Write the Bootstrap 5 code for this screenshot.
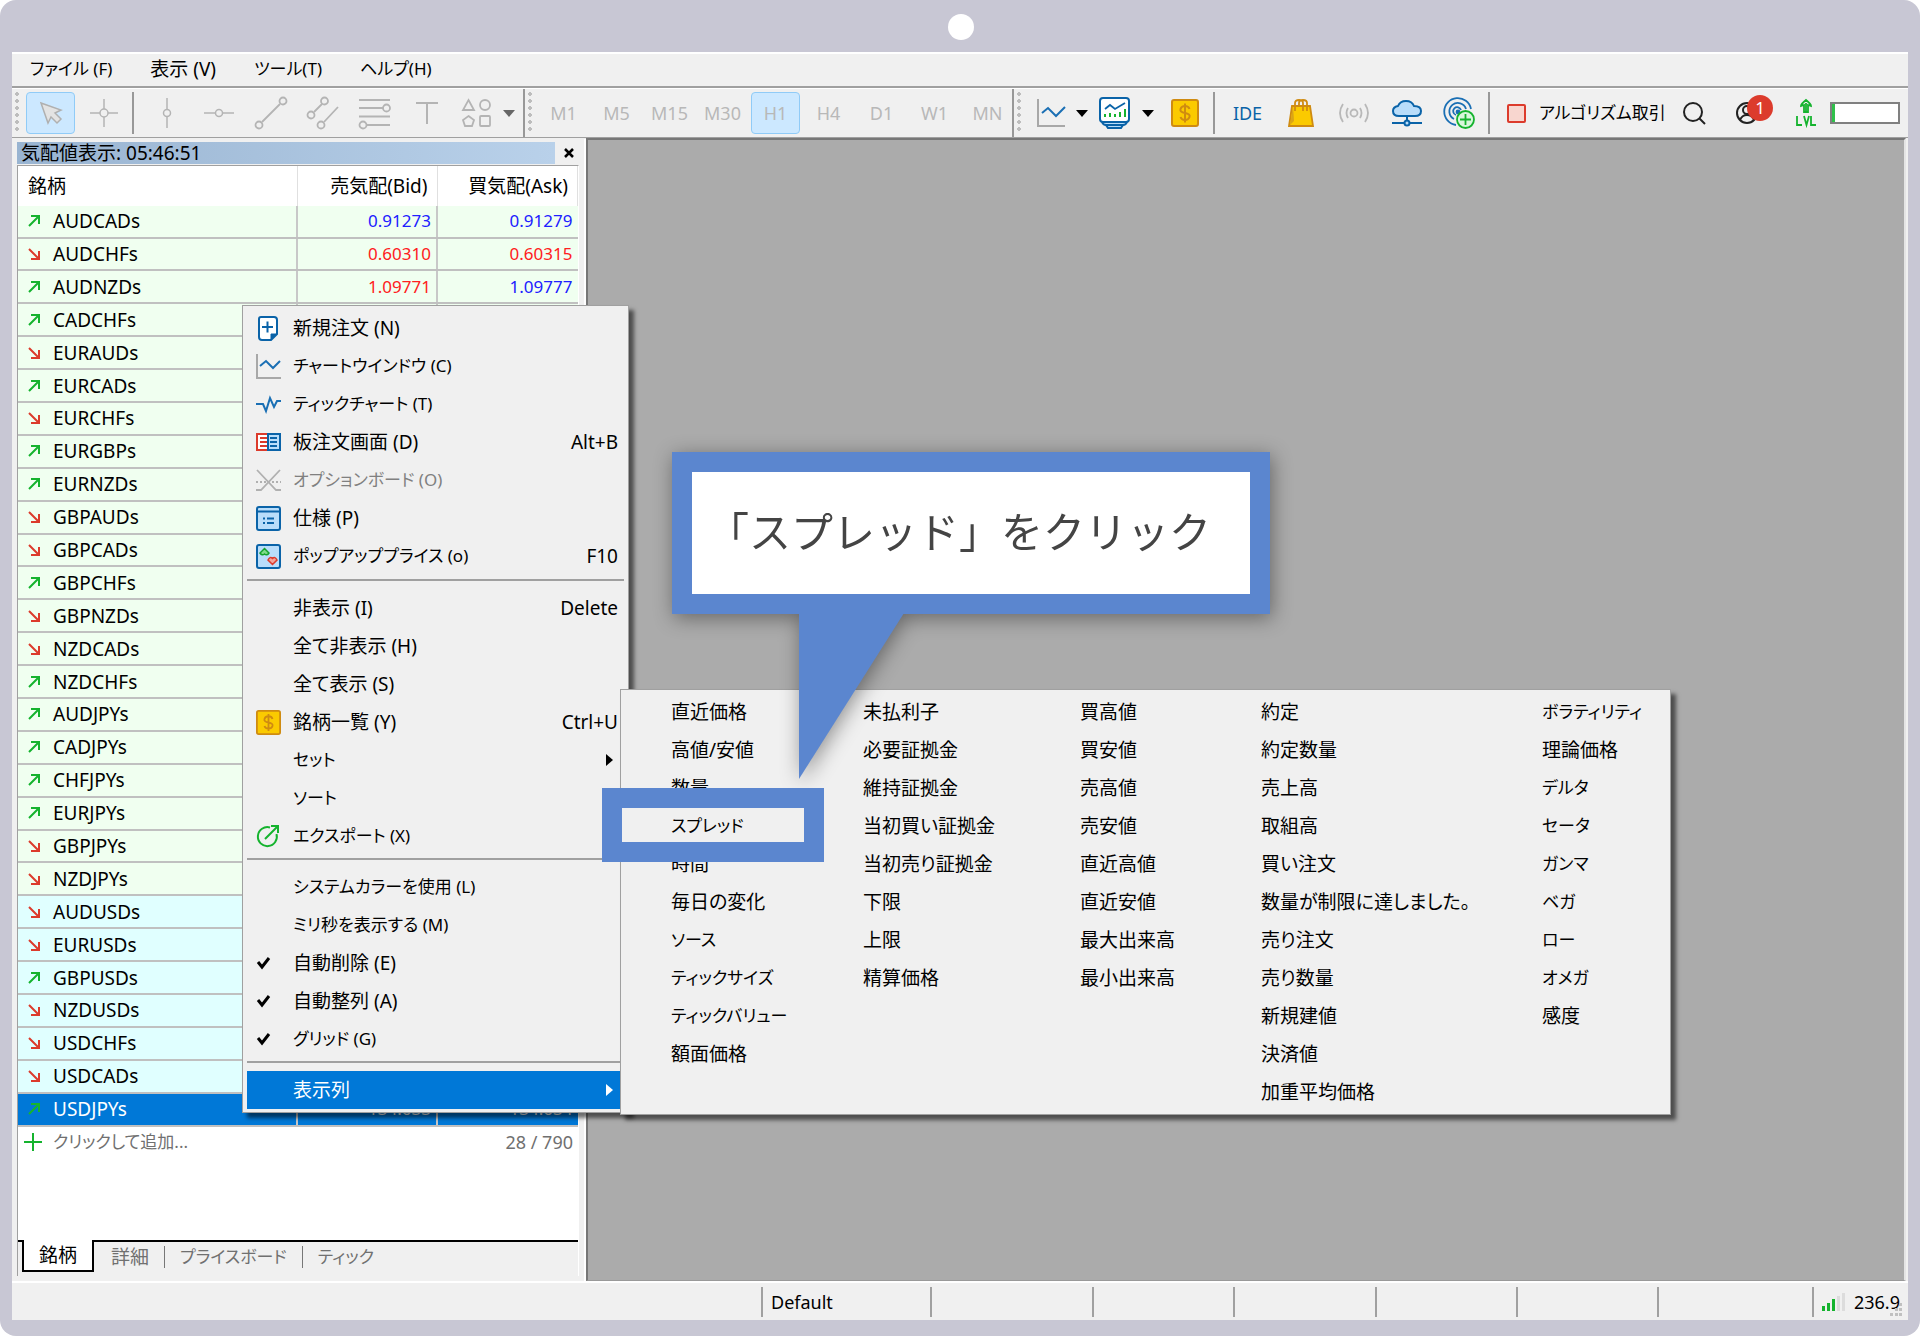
<!DOCTYPE html>
<html lang="ja">
<head>
<meta charset="utf-8">
<meta name="viewport" content="width=device-width, initial-scale=1">
<title>気配値表示</title>
<link href="https://cdn.jsdelivr.net/npm/bootstrap@5.3.0/dist/css/bootstrap.min.css" rel="stylesheet">
<style>
  html{background:#fff}
  body{
    --face:#f0f0f0; --edge:#a0a0a0; --accent:#5b86cf; --pick:#0078d7;
    margin:0; min-height:100vh; padding:0 12px 16px; border-radius:16px; background:#c8c7d4; color:#000;
    font-family:"Noto Sans","Noto Sans CJK JP",sans-serif; font-size:19px; line-height:24px;
    font-feature-settings:"palt";
  }
  button,a{font:inherit;color:inherit;text-decoration:none;font-feature-settings:inherit}
  svg{display:block;flex:none;overflow:visible}
  .frame-top{height:52px;padding:2px 0 0 2px}
  .cam{width:26px;height:26px;background:#fff}
  .app{flex:1;background:var(--face);border-top:2px solid #fff;min-width:0}
  .menu-row{height:34px;border-bottom:2px solid var(--edge);padding:0 0 2px 18px;gap:38px}
  .kana{font-size:17px}
  .latin,.tool{font-size:18px}
  .tool-row{height:50px;border-top:1px solid #fff;border-bottom:1px solid var(--edge)}
  .grip{width:4px;height:42px;margin:0 7px 0 3px;background:radial-gradient(circle at 2px 2px,#bdbdbd 2px,transparent 2px) 0 0/4px 7px}
  .tool{width:49px;height:42px;padding:0;border:1px solid transparent;border-radius:4px;background:none;color:#b8b8b8;display:flex;align-items:center;justify-content:center;flex:none}
  .tool.active{background:#cce8ff;border-color:#90cbf7}
  .tool.slim{width:17px}
  .tool.snug{width:45px}
  .tools{display:flex;gap:4px}
  .tools.close-set{gap:3px}
  .rule{width:2px;height:42px;background:#989898;flex:none}
  .rule.full{height:48px}
  .ide{color:#0a63a8}
  .blk{color:#000}
  .round-num{width:26px;height:26px;background:#dc3b2c;color:#fff;font-size:17px;line-height:26px;left:11px;top:-7px}
  .meter{width:70px;height:22px;border:2px solid #808080;background:#fff}
  .meter>i{display:block;height:100%;background:#2fc04a}
  .stage{flex:1}
  .panel{width:574px;border-right:2px solid #fff;padding:3px 5px 0 5px;margin-top:1px}
  .panel-title{height:22px;gap:4px}
  .panel-title h1{font-size:19px;line-height:22px;margin:0;padding-left:4px;font-weight:400;background:linear-gradient(90deg,#99b4d1,#b9d1ea)}
  .x-btn{width:20px;height:20px;border:0;background:none;padding:0}
  .sheet{margin-top:1px;border:1px solid var(--edge);border-bottom:0;border-right-color:#fff;background:#fff}
  .quotes{height:961px;margin:0;table-layout:fixed;width:100%;border-collapse:collapse}
  .quotes th{font-weight:400;height:40px;padding:0 9px 0 10px;border-right:1px solid #e0e0e0}
  .quotes td{padding:0 5px 0 10px;border-bottom:2px solid #c0c0c0;border-right:2px solid #c8c8c8;line-height:22px}
  .quotes td:last-child{border-right:0}
  .quotes .n{text-align:right;font-size:17px}
  .up-num{color:#2020ff}.dn-num{color:#ff2020}
  .g-jpy td{background:#f0fff0}.g-usd td{background:#e0ffff}.g-sel td{background:var(--pick);color:#fff}
  .add-row{height:30px;padding:0 5px 0 6px;gap:11px;color:#707070}
  .blank{flex:1}
  .tabs-bar{border-top:2px solid #000;height:36px;background:var(--face);padding-left:4px;color:#707070}
  .tabs-bar button{border:0;background:none;height:29px;padding:0 15px;line-height:26px}
  .tabs-bar button.on{background:#fff;color:#000;border:2px solid #000;border-top:0;height:32px;margin-top:-2px;margin-right:2px;width:72px;padding:0}
  .tabs-bar i{width:1px;height:22px;margin-top:4px;background:#777}
  .desk{flex:1;background:#ababab;border:2px solid #777;border-right:2px solid #e4e4e4;border-bottom:1px solid #999;margin-right:2px}
  .status{height:39px;border-top:2px solid #fff}
  .status>div{border-left:2px solid #a0a0a0;height:30px;line-height:30px;padding-left:8px}
  .flyout{position:absolute;display:block;background:var(--face);border:1px solid var(--edge);border-radius:0;color:#000;box-shadow:5px 5px 4px rgba(0,0,0,.55);padding:3px 4px;margin:0;font-size:19px;z-index:2}
  .ctx{left:230px;top:167px;width:387px}
  .ctx button,.sub button{display:flex;align-items:center;width:100%;height:38px;border:0;background:none;padding:0;text-align:left;white-space:nowrap}
  .ctx .ic{width:26px;height:26px;margin:0 12px 0 8px;display:grid;place-items:center;flex:none}
  .ctx kbd{margin-left:auto;margin-right:6px;background:none;color:inherit;font:inherit;padding:0}
  .ctx .tri{margin-left:auto;margin-right:11px}
  .ctx hr{margin:3px 0 8px;border:0;border-top:2px solid var(--edge);opacity:1}
  .ctx hr:first-of-type{margin-top:4px}
  .ctx .gray{color:#808080}
  .ctx button.cur{background:var(--pick);color:#fff}
  .sub{left:608px;top:551px;width:1051px;padding:3px 0 3px 50px;z-index:3}
  .sub .cols{display:grid;grid-template-columns:192px 217px 181px 281px 1fr}
  .ring{position:absolute;left:590px;top:650px;width:222px;height:74px;border:20px solid var(--accent);z-index:5}
  .say{position:absolute;left:660px;top:314px;width:598px;z-index:4;filter:drop-shadow(2px 4px 10px rgba(0,0,0,.4))}
  .say p{margin:0;height:162px;padding-right:24px;border:20px solid var(--accent);background:#fff;color:#444;font:400 42px/115px "Noto Sans CJK JP",sans-serif;font-feature-settings:normal;text-align:center;white-space:nowrap}
  .say svg{margin:-1px 0 0 127px}
</style>
<script src="https://cdn.jsdelivr.net/npm/bootstrap@5.3.0/dist/js/bootstrap.bundle.min.js"></script>
</head>
<body class="d-flex flex-column">
<div class="frame-top d-flex justify-content-center align-items-center"><span class="cam rounded-circle"></span></div>
<main class="app d-flex flex-column">
  <nav class="menu-row d-flex align-items-center" aria-label="メニュー">
    <a href="#" class="kana">ファイル (F)</a><a href="#">表示 (V)</a><a href="#" class="kana">ツール(T)</a><a href="#" class="kana">ヘルプ(H)</a>
  </nav>

  <div class="tool-row d-flex align-items-center" role="toolbar" aria-label="ツールバー">
    <span class="grip"></span>
    <div class="tools">
      <button class="tool active" aria-label="カーソル"><svg width="24" height="24" fill="#e3e3e3" stroke="#b0b0b0" stroke-width="1.5"><path d="M2 2 22 9 16 12 22 18 18 22 12 16 9 22Z"/></svg></button>
      <button class="tool" aria-label="十字"><svg width="28" height="28" fill="none" stroke="#b4b4b4" stroke-width="1.5"><path d="M14 0v10M14 18v10M0 14h10M18 14h10"/><circle cx="14" cy="14" r="4"/></svg></button>
    </div>
    <span class="rule ms-1 me-2"></span>
    <div class="tools close-set">
      <button class="tool" aria-label="垂直線"><svg width="30" height="30" fill="none" stroke="#b4b4b4" stroke-width="1.5"><path d="M15 0v11M15 19v11"/><circle cx="15" cy="15" r="3.5"/></svg></button>
      <button class="tool" aria-label="水平線"><svg width="30" height="30" fill="none" stroke="#b4b4b4" stroke-width="1.5"><path d="M0 15h11M19 15h11"/><circle cx="15" cy="15" r="3.5"/></svg></button>
      <button class="tool" aria-label="トレンドライン"><svg width="32" height="32" fill="none" stroke="#b4b4b4" stroke-width="1.8"><path d="M7 25 25 7"/><circle cx="4" cy="28" r="3.5"/><circle cx="28" cy="4" r="3.5"/></svg></button>
      <button class="tool" aria-label="チャネル"><svg width="32" height="32" fill="none" stroke="#b4b4b4" stroke-width="1.8"><path d="M7 15 15 7M17 25 31 10"/><circle cx="4" cy="18" r="3.5"/><circle cx="17.500" cy="4" r="3.5"/><circle cx="14" cy="28" r="3.5"/></svg></button>
      <button class="tool" aria-label="フィボナッチ"><svg width="32" height="30" fill="none" stroke="#b4b4b4" stroke-width="1.8"><path d="M0 2h31M0 10h24M0 18.500h31M8 27h23"/><circle cx="27.500" cy="10" r="3.500"/><circle cx="4" cy="27" r="3.500"/></svg></button>
      <button class="tool" aria-label="テキスト"><svg width="22" height="22" fill="none" stroke="#b4b4b4" stroke-width="2"><path d="M0 1h22M11 1v21"/></svg></button>
      <button class="tool snug" aria-label="図形"><svg width="29" height="30" fill="none" stroke="#b4b4b4" stroke-width="1.8"><path d="M6.500 2 12 12H1ZM6.500 18l5.500 4-2 6H3l-2-6Z"/><circle cx="23" cy="7" r="5"/><rect x="18" y="18" width="10" height="10" rx="1"/></svg></button>
    </div>
    <svg width="12" height="7" fill="#666" class="ms-1"><path d="M0 0h12L6 7Z"/></svg>
    <span class="rule full ms-2"></span>
    <span class="grip"></span>
    <div class="tools">
      <button class="tool">M1</button><button class="tool">M5</button><button class="tool">M15</button><button class="tool">M30</button><button class="tool active">H1</button><button class="tool">H4</button><button class="tool">D1</button><button class="tool">W1</button><button class="tool">MN</button>
    </div>
    <span class="rule full"></span>
    <span class="grip"></span>
    <button class="tool snug" aria-label="ラインチャート"><svg width="28" height="28" fill="none" stroke-width="2"><path d="M1 0v27h27" stroke="#a8a8a8"/><path d="M5 14 11 9l8 8 9-9" stroke="#1a6fb4"/></svg></button>
    <button class="tool slim blk" aria-label="種類"><svg width="12" height="7"><path d="M0 0h12L6 7Z"/></svg></button>
    <button class="tool" aria-label="指標"><svg width="31" height="32" fill="#fff" stroke="#0a63a8" stroke-width="2"><path d="M3 25q1 3 4 3l2 3h13l2-3q3 0 4-3" fill="#b9ddfa"/><path d="M6 28h19"/><rect x="1" y="1" width="29" height="24" rx="3"/><path d="M6 12l5-4 5 4 10-6" fill="none" stroke-width="1.800"/><path d="M6 20v-3M11 20v-4M16 20v-3M21 20v-5M26 20v-8" stroke="#15b32e"/></svg></button>
    <button class="tool slim blk" aria-label="指標一覧"><svg width="12" height="7"><path d="M0 0h12L6 7Z"/></svg></button>
    <button class="tool ms-1" aria-label="銘柄"><svg width="28" height="28"><use href="#coin"/></svg></button>
    <span class="rule ms-1 me-2"></span>
    <div class="tools">
      <button class="tool ide">IDE</button>
      <button class="tool" aria-label="マーケット"><svg width="26" height="28" fill="#fbca00" stroke="#cf8b11" stroke-width="1.800"><path d="M4 7h18l3 20H1Z"/><path d="M5 7 2 26l4-4Z" fill="#dba417" stroke="none"/><path d="M7 12V4q0-3 4-3t4 3v8M11 8V4q0-3 4-3t4 3v8" fill="none"/></svg></button>
      <button class="tool" aria-label="シグナル"><svg width="30" height="20" fill="none" stroke="#b8b8b8" stroke-width="1.800"><circle cx="15" cy="10" r="3.500"/><path d="M9 5q-3 5 0 10M21 5q3 5 0 10M4 1q-6 9 0 18M26 1q6 9 0 18"/></svg></button>
      <button class="tool" aria-label="VPS"><svg width="30" height="26" fill="#b9ddfa" stroke="#0a63a8" stroke-width="2"><path d="M7 16q-6 0-6-5 0-4 5-5 2-5 8-5t8 5q7 0 7 5t-6 5Z"/><path d="M15 16v6M0 23h12M18 23h12" fill="none"/><circle cx="15" cy="23" r="2.500"/></svg></button>
      <button class="tool" aria-label="接続"><svg width="31" height="31" fill="none" stroke="#1a6fb4" stroke-width="1.800"><path d="M12 27A13.500 13.500 0 1 1 27 11M10 21A8.500 8.500 0 1 1 22 11M12 17A4 4 0 1 1 17 12"/><circle cx="14" cy="14" r="1.500" fill="#1a6fb4"/><circle cx="21.500" cy="21.500" r="8.500" fill="#d8f7dc" stroke="#15b32e"/><path d="M16 21.500h11M21.500 16v11" stroke="#15b32e"/></svg></button>
    </div>
    <span class="rule ms-1 me-3"></span>
    <button class="tool blk w-auto" style="gap:13px"><svg width="19" height="19"><rect x="1" y="1" width="17" height="17" rx="1" fill="#f8d6cf" stroke="#dc3b2c" stroke-width="2"/></svg><span class="kana">アルゴリズム取引</span></button>
    <div class="d-flex align-items-center ms-auto me-2" style="gap:14px">
      <svg class="me-3" width="23" height="23" fill="none" stroke="#222" stroke-width="2"><circle cx="10" cy="10" r="9"/><path d="m16 16 6 6"/></svg>
      <span class="position-relative me-4"><svg width="22" height="22" fill="none" stroke="#222" stroke-width="2"><circle cx="11" cy="11" r="10"/><circle cx="11" cy="8" r="4"/><path d="M4 18q2-5 7-5t7 5"/></svg><span class="round-num position-absolute rounded-circle text-center">1</span></span>
      <svg width="20" height="28" fill="none" stroke="#15b32e" stroke-width="1.800"><path d="M5 7q0-2 5-6 5 4 5 6l-3-1v7H8V6Z"/><path d="M10 4v8M1 17v9h5M8 17l2.500 9 2.500-9M15 17v9h5"/></svg>
      <div class="meter"><i style="width:5%"></i></div>
    </div>
  </div>

  <div class="stage d-flex position-relative">
    <section class="panel d-flex flex-column flex-shrink-0">
      <div class="panel-title d-flex align-items-center"><h1 class="flex-fill">気配値表示: 05:46:51</h1>
        <button class="x-btn" aria-label="閉じる"><svg width="10" height="10" class="mx-auto" stroke="#000" stroke-width="2.500"><path d="m1 1 8 8M9 1 1 9"/></svg></button></div>
      <div class="sheet flex-fill d-flex flex-column">
        <table class="quotes"><colgroup><col style="width:279px"><col style="width:140px"><col></colgroup>
          <thead><tr><th>銘柄</th><th class="text-end">売気配(Bid)</th><th class="text-end">買気配(Ask)</th></tr></thead><tbody id="rows"></tbody></table>
        <div class="add-row d-flex align-items-center"><svg width="18" height="18" stroke="#15b32e" stroke-width="2"><path d="M9 0v18M0 9h18"/></svg><span class="kana flex-fill">クリックして追加...</span><span class="latin">28 / 790</span></div>
        <div class="blank"></div>
        <div class="tabs-bar d-flex" role="tablist"><button class="on" role="tab">銘柄</button><button role="tab">詳細</button><i></i><button role="tab" class="kana">プライスボード</button><i></i><button role="tab" class="kana">ティック</button></div>
      </div>
      <div style="height:5px"></div>
    </section>
    <div class="desk"></div>

    <div class="dropdown-menu flyout ctx">
      <button><span class="ic"><svg width="20" height="25" fill="#fff" stroke="#0a63a8" stroke-width="2"><path d="M3 1h13q3 0 3 3v14l-6 6H4q-3 0-3-3V3q0-2 2-2Z"/><path d="M18 18l-5 5v-5Z" fill="#0a63a8" stroke-width="1"/><path d="M4 11h11M9.500 5.500v11"/></svg></span>新規注文 (N)</button>
      <button><span class="ic"><svg width="25" height="25" fill="none" stroke-width="2"><path d="M1 0v24h24" stroke="#a8a8a8"/><path d="M4 12 10 7l7 7 7-7" stroke="#1a6fb4"/></svg></span><span class="kana">チャートウインドウ (C)</span></button>
      <button><span class="ic"><svg width="25" height="16" fill="none" stroke="#1a6fb4" stroke-width="2"><path d="M0 8h7l3 7 4-13 4 9 3-6h4"/></svg></span><span class="kana">ティックチャート (T)</span></button>
      <button><span class="ic"><svg width="25" height="18" stroke-width="2"><path d="M12 1H1v16h11" fill="#fff" stroke="#dc3b2c"/><path d="M12 1h12v16H12Z" fill="#b9ddfa" stroke="#0a63a8"/><path d="M4 5h7M4 9h7M4 13h7" stroke="#dc3b2c"/><path d="M14 5h7M14 9h7M14 13h7" stroke="#0a63a8"/></svg></span>板注文画面 (D)<kbd>Alt+B</kbd></button>
      <button class="gray"><span class="ic"><svg width="25" height="21" fill="none" stroke="#b0b0b0" stroke-width="1.800"><path d="M1 0 20 20h5M24 0 5 20H0"/><path d="M0 12h25" stroke-dasharray="2 2"/></svg></span><span class="kana">オプションボード (O)</span></button>
      <button><span class="ic"><svg width="25" height="25" fill="#b9ddfa" stroke="#0a63a8" stroke-width="2"><rect x="1" y="1" width="23" height="23" rx="2"/><path d="M1 5.500h23M7 12.500h2M11 12.500h7M7 17h2M11 17h7"/></svg></span>仕様 (P)</button>
      <button><span class="ic"><svg width="25" height="25" stroke-width="1.500"><rect x="1" y="1" width="23" height="23" rx="2" fill="#b9ddfa" stroke="#0a63a8" stroke-width="2"/><path d="M8.500 4.500 13 9q-2 3-4.500 1Q6 12 4 9Z" fill="#7fdc8a" stroke="#15a32e"/><path d="M16.500 20.500 12 16q2-4 4.500-1.500Q19 12 21 16Z" fill="#f3a39a" stroke="#dc3b2c"/></svg></span><span class="kana">ポップアッププライス (o)</span><kbd>F10</kbd></button>
      <hr>
      <button><span class="ic"></span>非表示 (I)<kbd>Delete</kbd></button>
      <button><span class="ic"></span>全て非表示 (H)</button>
      <button><span class="ic"></span>全て表示 (S)</button>
      <button><span class="ic"><svg width="25" height="25" viewBox="0 0 28 28"><g id="coin"><rect x="1" y="1" width="26" height="26" rx="2" fill="#fbca00" stroke="#cf8b11" stroke-width="2"/><path d="M18.500 10q-1-3-4.500-3t-4.500 3 4.500 4 4.500 4-4.500 3-4.500-3M14 4.500v19" fill="none" stroke="#cf8b11" stroke-width="2"/></g></svg></span>銘柄一覧 (Y)<kbd>Ctrl+U</kbd></button>
      <button><span class="ic"></span><span class="kana">セット</span><svg class="tri" width="7" height="12"><path d="M0 0 7 6 0 12Z"/></svg></button>
      <button><span class="ic"></span><span class="kana">ソート</span></button>
      <button><span class="ic"><svg width="22" height="22" fill="none" stroke="#15b32e" stroke-width="2"><path d="M13 2.500A9.500 9.500 0 1 0 19.500 9M8 14 21 1M14 1h7v7"/></svg></span><span class="kana">エクスポート (X)</span></button>
      <hr>
      <button><span class="ic"></span><span class="kana">システムカラーを使用 (L)</span></button>
      <button><span class="ic"></span><span class="kana">ミリ秒を表示する (M)</span></button>
      <button><span class="ic"><svg width="14" height="12" class="me-2" fill="none" stroke="#000" stroke-width="3"><path d="m1 5 4 5 7-9"/></svg></span>自動削除 (E)</button>
      <button><span class="ic"><svg width="14" height="12" class="me-2" fill="none" stroke="#000" stroke-width="3"><path d="m1 5 4 5 7-9"/></svg></span>自動整列 (A)</button>
      <button><span class="ic"><svg width="14" height="12" class="me-2" fill="none" stroke="#000" stroke-width="3"><path d="m1 5 4 5 7-9"/></svg></span><span class="kana">グリッド (G)</span></button>
      <hr>
      <button class="cur"><span class="ic"></span>表示列<svg class="tri" width="7" height="12" fill="#fff"><path d="M0 0 7 6 0 12Z"/></svg></button>
    </div>

    <div class="dropdown-menu flyout sub"><div class="cols">
      <div><button>直近価格</button><button>高値/安値</button><button>数量</button><button class="kana">スプレッド</button><button>時間</button><button>毎日の変化</button><button class="kana">ソース</button><button class="kana">ティックサイズ</button><button class="kana">ティックバリュー</button><button>額面価格</button></div>
      <div><button>未払利子</button><button>必要証拠金</button><button>維持証拠金</button><button>当初買い証拠金</button><button>当初売り証拠金</button><button>下限</button><button>上限</button><button>精算価格</button></div>
      <div><button>買高値</button><button>買安値</button><button>売高値</button><button>売安値</button><button>直近高値</button><button>直近安値</button><button>最大出来高</button><button>最小出来高</button></div>
      <div><button>約定</button><button>約定数量</button><button>売上高</button><button>取組高</button><button>買い注文</button><button>数量が制限に達しました。</button><button>売り注文</button><button>売り数量</button><button>新規建値</button><button>決済値</button><button>加重平均価格</button></div>
      <div><button class="kana">ボラティリティ</button><button>理論価格</button><button class="kana">デルタ</button><button class="kana">セータ</button><button class="kana">ガンマ</button><button class="kana">ベガ</button><button class="kana">ロー</button><button class="kana">オメガ</button><button>感度</button></div>
    </div></div>

    <div class="say"><p>「スプレッド」をクリック</p><svg width="105" height="166" fill="#5b86cf"><path d="M0 0h105L0 166Z"/></svg></div>
    <div class="ring"></div>
  </div>

  <footer class="status d-flex align-items-center latin">
    <span style="width:749px"></span>
    <div style="width:169px">Default</div><div style="width:162px"></div><div style="width:141px"></div><div style="width:142px"></div><div style="width:141px"></div><div style="width:141px"></div><div class="flex-fill"></div>
    <div class="d-flex align-items-center gap-2 position-relative"><svg width="24" height="18"><path d="M0 13h3v5H0ZM5 10h3v8H5ZM10 6h3v12h-3Z" fill="#15b32e"/><path d="M15 3h3v15h-3ZM20 0h3v18h-3Z" fill="#dcdcdc"/></svg><span class="pe-2">236.9</span>
      <svg class="position-absolute end-0 bottom-0 me-1" width="14" height="14" fill="#c0c0c0"><path d="M9 0h3v3H9ZM5 5h3v3H5ZM9 5h3v3H9ZM0 10h3v3H0ZM5 10h3v3H5ZM9 10h3v3H9Z"/></svg></div>
  </footer>
</main>
<script>
  const quotes = 'AUDCADs+ AUDCHFs- AUDNZDs+ CADCHFs+ EURAUDs- EURCADs+ EURCHFs- EURGBPs+ EURNZDs+ GBPAUDs- GBPCADs- GBPCHFs+ GBPNZDs- NZDCADs- NZDCHFs+ AUDJPYs+ CADJPYs+ CHFJPYs+ EURJPYs+ GBPJPYs- NZDJPYs- AUDUSDs- EURUSDs- GBPUSDs+ NZDUSDs- USDCHFs- USDCADs- USDJPYs+'.split(' ');
  const price = {0:['0.91273','0.91279','up','up'],1:['0.60310','0.60315','dn','dn'],2:['1.09771','1.09777','dn','up'],27:['134.633','134.634','','']};
  document.getElementById('rows').innerHTML = quotes.map((q,i)=>{
    const up = q.endsWith('+'), p = price[i] || ['','','',''];
    const arrow = up ? '<path d="m1 11 10-10M3 1h8v8" stroke="#15b32e"/>' : '<path d="m1 1 10 10M3 11h8V3" stroke="#dc3b2c"/>';
    const group = i === 27 ? 'g-sel' : i > 20 ? 'g-usd' : 'g-jpy';
    return `<tr class="${group}"><td><span class="d-flex align-items-center" style="gap:13px"><svg width="12" height="12" fill="none" stroke-width="2">${arrow}</svg>${q.slice(0,-1)}</span></td><td class="n ${p[2]}-num">${p[0]}</td><td class="n ${p[3]}-num">${p[1]}</td></tr>`;
  }).join('');
</script>
</body>
</html>
